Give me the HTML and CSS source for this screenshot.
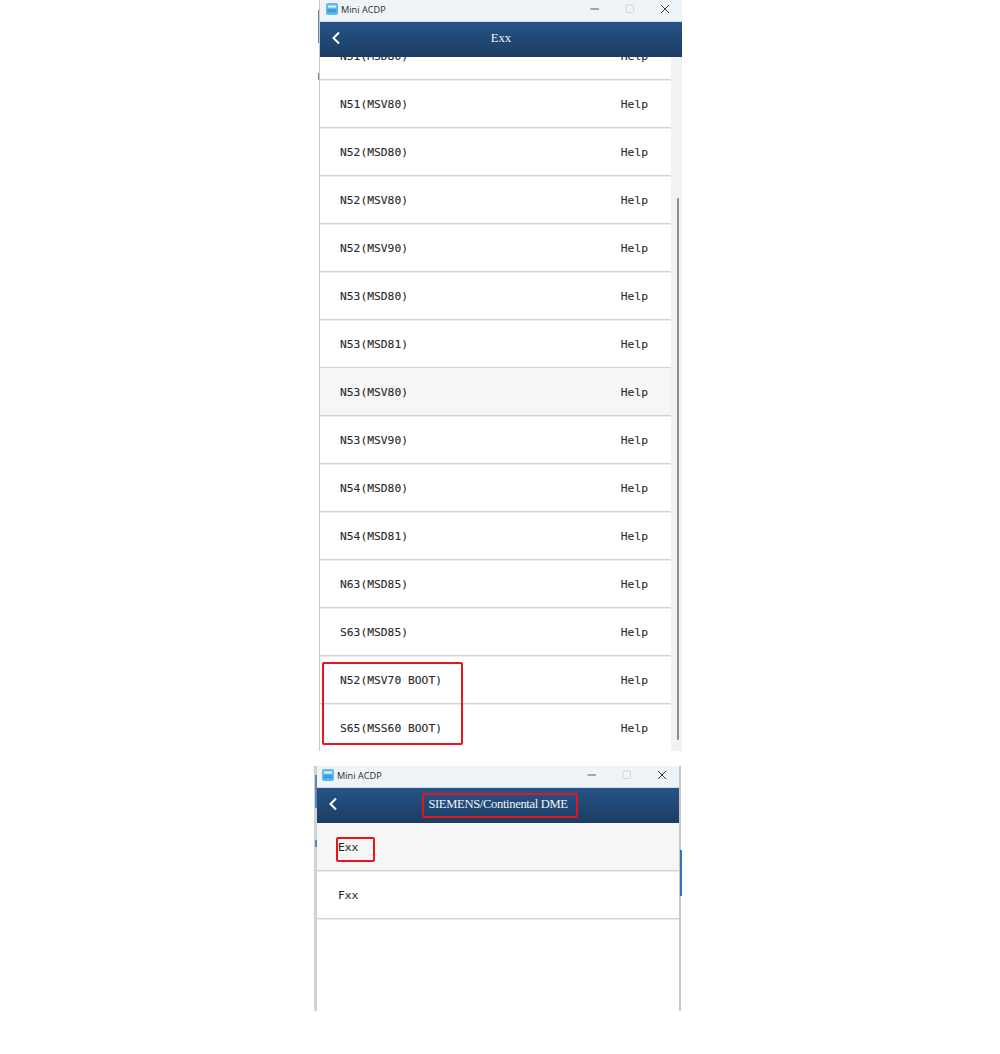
FILE: index.html
```html
<!DOCTYPE html>
<html>

<head>
  <title>Mini ACDP</title>
  <link rel="stylesheet" href="styles.css">
</head>

<body>
  <div class="window window-exx">
    <span class="sliver sliver-a"></span>
    <span class="sliver sliver-b"></span>
    <div class="titlebar">
      <svg class="app-icon" width="12" height="12" viewBox="0 0 12 12">
        <rect width="12" height="12" rx="2" fill="#5cbcf2" />
        <rect x="2" y="2.5" width="8" height="2" fill="#ffffff" opacity="0.85" />
        <rect x="1.5" y="6" width="9" height="3.5" fill="#2f8fd8" opacity="0.7" />
      </svg>
      <span class="app-name">Mini ACDP</span>
      <div class="win-buttons">
        <svg width="10" height="10" viewBox="0 0 10 10"><path d="M0.5 5H9" stroke="#55595c" stroke-width="1" /></svg>
        <svg width="10" height="10" viewBox="0 0 10 10"><rect x="1" y="1" width="7.5" height="7.5" rx="1" fill="none" stroke="#cfd4d8" /></svg>
        <svg width="10" height="10" viewBox="0 0 10 10"><path d="M1 1L9 9M9 1L1 9" stroke="#3a3d40" stroke-width="1" /></svg>
      </div>
    </div>
    <div class="header">
      <svg class="back" width="10" height="14" viewBox="0 0 10 14"><path d="M8 1.5L2.5 7L8 12.5" fill="none" stroke="#ffffff" stroke-width="2" /></svg>
      <span class="header-title">Exx</span>
    </div>
    <div class="body-row">
      <div class="list list-scrolled">
        <div class="row"><span>N51(MSD80)</span><span class="help">Help</span></div>
        <div class="row"><span>N51(MSV80)</span><span class="help">Help</span></div>
        <div class="row"><span>N52(MSD80)</span><span class="help">Help</span></div>
        <div class="row"><span>N52(MSV80)</span><span class="help">Help</span></div>
        <div class="row"><span>N52(MSV90)</span><span class="help">Help</span></div>
        <div class="row"><span>N53(MSD80)</span><span class="help">Help</span></div>
        <div class="row"><span>N53(MSD81)</span><span class="help">Help</span></div>
        <div class="row row-hover"><span>N53(MSV80)</span><span class="help">Help</span></div>
        <div class="row"><span>N53(MSV90)</span><span class="help">Help</span></div>
        <div class="row"><span>N54(MSD80)</span><span class="help">Help</span></div>
        <div class="row"><span>N54(MSD81)</span><span class="help">Help</span></div>
        <div class="row"><span>N63(MSD85)</span><span class="help">Help</span></div>
        <div class="row"><span>S63(MSD85)</span><span class="help">Help</span></div>
        <div class="row"><span>N52(MSV70 BOOT)</span><span class="help">Help</span></div>
        <div class="row row-last"><span>S65(MSS60 BOOT)</span><span class="help">Help</span></div>
      </div>
      <div class="scrollbar"><div class="thumb"></div></div>
    </div>
    <div class="mark mark-boot"></div>
  </div>

  <div class="window window-dme">
    <span class="sliver sliver-c"></span>
    <span class="sliver sliver-d"></span>
    <span class="sliver sliver-e"></span>
    <div class="titlebar">
      <svg class="app-icon" width="12" height="12" viewBox="0 0 12 12">
        <rect width="12" height="12" rx="2" fill="#5cbcf2" />
        <rect x="2" y="2.5" width="8" height="2" fill="#ffffff" opacity="0.85" />
        <rect x="1.5" y="6" width="9" height="3.5" fill="#2f8fd8" opacity="0.7" />
      </svg>
      <span class="app-name">Mini ACDP</span>
      <div class="win-buttons">
        <svg width="10" height="10" viewBox="0 0 10 10"><path d="M0.5 5H9" stroke="#55595c" stroke-width="1" /></svg>
        <svg width="10" height="10" viewBox="0 0 10 10"><rect x="1" y="1" width="7.5" height="7.5" rx="1" fill="none" stroke="#cfd4d8" /></svg>
        <svg width="10" height="10" viewBox="0 0 10 10"><path d="M1 1L9 9M9 1L1 9" stroke="#3a3d40" stroke-width="1" /></svg>
      </div>
    </div>
    <div class="header">
      <svg class="back" width="10" height="14" viewBox="0 0 10 14"><path d="M8 1.5L2.5 7L8 12.5" fill="none" stroke="#ffffff" stroke-width="2" /></svg>
      <span class="header-title title-long">SIEMENS/Continental DME</span>
    </div>
    <div class="list">
      <div class="row row-hover"><span>Exx</span></div>
      <div class="row"><span>Fxx</span></div>
    </div>
    <div class="mark mark-title"></div>
    <div class="mark mark-exx"></div>
  </div>
</body>

</html>
```

FILE: styles.css
```css
body {
  margin: 0;
  background-color: #ffffff;
  font-family: "DejaVu Sans Mono", monospace;
  height: 1054px;
  overflow: hidden;
}

.window {
  position: relative;
  display: flex;
  flex-direction: column;
  background-color: #fff;
  box-sizing: border-box;
}

.window-exx {
  width: 363px;
  height: 751px;
  margin-left: 319px;
  border-left: 1px solid #c9c9c9;
}

.window-dme {
  width: 367px;
  height: 245px;
  margin-top: 15px;
  margin-left: 314px;
  border-left: 3px solid #d2d2d2;
  border-right: 2px solid #c6c6c6;
}

.titlebar {
  flex: none;
  display: flex;
  align-items: center;
  height: 21px;
  padding-left: 6px;
  padding-bottom: 3px;
  background-color: #eff4f8;
  box-sizing: border-box;
}

.window-dme .titlebar {
  padding-left: 5px;
}

.app-icon {
  margin-right: 3px;
}

.app-name {
  font-family: "Open Sans", sans-serif;
  font-size: 9.2px;
  color: #2b2b2b;
}

.win-buttons {
  margin-left: auto;
  display: flex;
  align-items: center;
  gap: 25px;
  padding-right: 12px;
}

.header {
  flex: none;
  position: relative;
  z-index: 1;
  display: flex;
  align-items: center;
  justify-content: center;
  height: 36px;
  padding-bottom: 2px;
  background: linear-gradient(#255488, #1c3c62);
  border-top: 1px solid #cfdbe6;
  box-sizing: border-box;
}

.back {
  position: absolute;
  left: 11px;
  top: 9px;
}

.header-title {
  font-family: "Liberation Serif", serif;
  font-size: 12.6px;
  color: #f2f5f8;
}

.title-long {
  letter-spacing: -0.35px;
}

.body-row {
  flex: 1;
  display: flex;
  min-height: 0;
}

.list {
  flex: 1;
  display: flex;
  flex-direction: column;
  min-width: 0;
  overflow: hidden;
}

.list-scrolled {
  justify-content: flex-end;
}

.row {
  flex: none;
  display: flex;
  align-items: center;
  justify-content: space-between;
  height: 48px;
  padding: 1px 23px 0 20px;
  font-size: 11.3px;
  color: #2a2a2a;
  -webkit-text-stroke: 0.1px #2a2a2a;
  border-bottom: 1px solid #d2d2d2;
  box-shadow: 0 1px 0 #ececec;
  box-sizing: border-box;
}

.window-dme .row {
  padding-left: 21px;
  padding-top: 2px;
}

.row-hover {
  background-color: #f6f6f6;
}

.row-last {
  margin-bottom: -1px;
}

.help {
  color: #2a2a2a;
}

.scrollbar {
  flex: none;
  width: 11px;
  background-color: #f2f2f2;
  padding-top: 141px;
  box-sizing: border-box;
}

.thumb {
  width: 2px;
  height: 542px;
  margin-left: 6px;
  background-color: #8c8c8c;
  border-radius: 1px;
}

/* red annotation boxes */
.mark {
  position: absolute;
  border: 2px solid #e8141c;
  border-radius: 2px;
  box-sizing: border-box;
  z-index: 2;
}

.mark-boot {
  left: 2px;
  top: 662px;
  width: 141px;
  height: 83px;
}

.mark-title {
  left: 105px;
  top: 27px;
  width: 156px;
  height: 25px;
}

.mark-exx {
  left: 19px;
  top: 71px;
  width: 39px;
  height: 25px;
}

/* bits of the window behind */
.sliver {
  position: absolute;
  width: 1px;
  background-color: #5f86b0;
}

.sliver-a {
  left: -2px;
  top: 10px;
  height: 33px;
}

.sliver-b {
  left: -2px;
  top: 73px;
  height: 7px;
}

.sliver-c {
  left: -2px;
  top: 9px;
  width: 2px;
  height: 33px;
}

.sliver-d {
  left: -2px;
  top: 74px;
  width: 2px;
  height: 7px;
}

.sliver-e {
  left: 363px;
  top: 84px;
  width: 2px;
  height: 46px;
  background-color: #2f74bd;
}
```
